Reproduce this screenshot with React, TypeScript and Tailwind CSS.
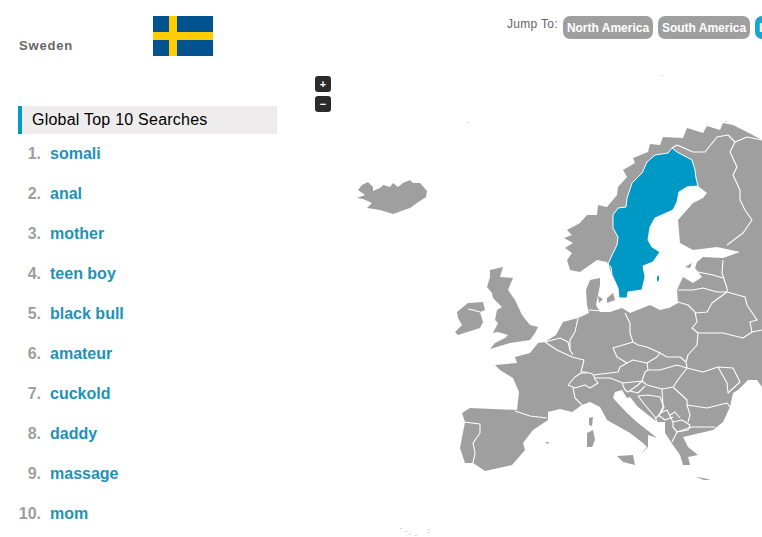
const land = [
  "770,130 762,140 747,132 733,125 723,123 720,130 707,126 703,133 687,128 683,138 663,137 660,145 650,144 648,152 633,158 635,163 623,170 627,177 618,187 617,195 607,207 598,205 597,215 587,215 580,223 567,230 572,235 564,238 573,243 565,248 572,253 567,260 570,270 580,272 597,260 607,262 608,264 612,275 618,288 619,298 627,298 628,292 642,290 645,277 643,266 653,262 660,252 652,247 648,240 650,227 655,218 673,210 677,202 679,192 687,186 698,186 707,193 703,198 693,203 678,220 680,243 693,250 717,247 740,252 723,258 703,257 697,262 695,268 702,277 693,283 683,277 677,290 678,303 668,308 660,310 650,305 630,313 622,308 610,312 600,312 596,305 598,295 600,285 600,278 590,280 586,290 587,305 589,313 578,318 563,322 556,335 545,342 538,343 530,353 515,357 517,363 495,365 500,370 513,378 519,392 517,410 470,408 462,413 465,422 460,448 465,463 473,463 485,471 512,465 525,450 523,443 533,430 548,420 548,412 560,409 572,412 582,405 590,402 600,407 607,420 630,433 643,443 647,447 640,455 648,447 648,435 657,438 647,430 638,423 627,413 613,398 615,392 622,390 627,398 630,397 638,407 657,422 665,422 665,433 673,445 680,455 683,465 690,465 688,457 698,455 688,447 683,437 713,430 723,422 730,407 733,393 738,390 748,380 757,380 762,387 770,390",
  "490,270 503,267 500,277 513,278 508,290 515,300 522,315 530,325 538,327 535,333 530,340 510,343 490,349 495,343 505,338 508,335 498,332 493,333 498,323 495,320 497,310 502,307 493,298 492,293 487,287 490,277",
  "457,312 468,303 483,302 485,310 480,312 483,322 480,328 458,335 455,332 462,325 458,318",
  "357,198 365,195 358,190 362,185 368,182 373,187 373,191 380,188 383,185 390,187 393,183 398,187 403,183 410,180 413,183 420,183 427,191 426,197 417,203 410,208 393,214 380,210 367,208 372,203 363,199",
  "617,456 633,455 635,465 623,462",
  "587,433 593,430 595,440 592,447 587,447",
  "589,418 593,417 592,426 589,425",
  "545,442 549,442 548,444",
  "695,477 703,478 711,480 704,480",
  "607,298 613,293 615,300 607,303",
  "598,296 603,299 599,303",
  "685,267 692,263 690,268",
];

const borders = [
  "672,148 677,145 693,152 705,152 717,137 728,135 735,142 747,137 762,140",
  "735,142 730,152 737,167 733,175 740,190 740,200 745,210 752,220 743,233 727,245",
  "723,260 722,273 727,288 727,292 745,297 747,305 757,320 750,322 752,332",
  "698,272 703,273 713,275 723,278",
  "678,290 693,290 703,288 717,292 727,292",
  "727,292 712,303 707,312 695,313",
  "668,308 678,302 688,305 695,312",
  "695,312 697,322 692,328 698,333 697,345 688,355 686,362 687,368",
  "698,333 723,333 743,338 752,332 762,330",
  "625,313 630,323 630,333 633,342",
  "633,342 613,348 617,357 627,363 633,360 647,363 657,357 660,353 647,347 638,345 633,342",
  "660,353 667,357 680,357 686,362",
  "647,363 648,370 660,370 677,365 687,368",
  "627,363 620,367 618,372 593,375 595,378 610,378 623,383 642,381 645,372 648,370",
  "584,360 581,372 585,372 593,374",
  "545,342 557,350 572,357 584,360",
  "545,342 560,338 568,342 570,350 573,355",
  "578,318 575,332 570,340 570,350",
  "589,310 603,311",
  "568,385 575,377 581,373 587,373",
  "568,385 575,388 585,385 590,388 598,383 594,378",
  "573,388 575,398 582,405",
  "515,411 530,416 547,418",
  "464,422 480,424 480,433 473,443 475,453 473,463",
  "622,383 625,390 628,392 638,385 642,381",
  "642,381 647,385 662,389 673,387 680,377 687,368",
  "638,396 648,395 660,397 664,407 661,413 656,418",
  "638,396 645,405 655,417 657,422",
  "630,391 638,393 645,386",
  "687,368 703,372 718,367 733,368 740,382 728,393 727,383 718,367",
  "687,405 707,408 727,403 730,407",
  "673,387 687,400 687,405 690,415 688,422",
  "673,422 682,420 690,425 688,430 677,432 673,427 673,422",
  "662,389 663,407 660,413 667,410 673,422",
  "658,415 665,420 673,417",
  "673,427 677,432 672,442",
  "677,432 692,427 715,427",
  "670,415 675,412 680,418",
  "468,309 473,310 480,312",
];

const sweden =
  "672,148 677,152 692,160 695,170 696,178 698,186 687,187 679,192 677,202 673,210 655,218 650,227 648,240 652,247 660,252 653,262 643,266 645,277 642,290 628,292 627,298 619,298 618,288 612,275 611,267 608,264 613,253 617,245 618,237 613,228 613,215 618,208 626,207 627,198 632,183 642,173 647,162 655,155 668,153";

const specks = [
  [467, 122], [661, 75], [405, 531], [409, 534], [415, 535], [427, 532], [428, 529], [400, 528], [725, 121],
];

const searches = ["somali", "anal", "mother", "teen boy", "black bull", "amateur", "cuckold", "daddy", "massage", "mom"];

export default function App() {
  return (
    <div className="relative flex h-[537px] w-[762px] overflow-hidden bg-white font-['Liberation_Sans',Arial,sans-serif]">
      <svg className="absolute inset-0" width="762" height="537" viewBox="0 0 762 537">
        {land.map((p) => (
          <polygon key={p} points={p} fill="#9f9f9f" />
        ))}
        {borders.map((p) => (
          <polyline key={p} points={p} fill="none" stroke="#ffffff" strokeWidth="1.1" strokeLinejoin="round" />
        ))}
        <polygon points={sweden} fill="#0099c6" stroke="#ffffff" strokeWidth="1" />
        <polygon points="657,277 659,275 659,280 657,282" fill="#0099c6" />
        {specks.map(([x, y]) => (
          <rect key={`${x}-${y}`} x={x} y={y} width="2" height="1" fill="#d4d4d4" />
        ))}
      </svg>

      <div className="relative w-[315px] shrink-0 pl-[18px]">
        <div className="flex h-[106px] items-start pt-[16px]">
          <div className="mt-[22px] w-[135px] pl-px text-[13px] leading-4 font-bold tracking-[0.8px] text-[#666666]">
            Sweden
          </div>
          <svg width="60" height="40" viewBox="0 0 60 40" className="shrink-0">
            <rect width="60" height="40" fill="#00538f" />
            <rect x="16" width="8" height="40" fill="#ffcd00" />
            <rect y="16" width="60" height="8" fill="#ffcd00" />
          </svg>
        </div>
        <h2 className="flex h-[28px] w-[259px] items-center border-l-4 border-[#009ac8] bg-[#eeecec] pl-[10px] text-[16px] font-normal tracking-[0.23px] text-black">
          Global Top 10 Searches
        </h2>
        <ol>
          {searches.map((s, i) => (
            <li key={s} className="flex h-[40px] items-center text-[16px] font-bold">
              <span className="w-[23px] whitespace-nowrap text-right text-[#9e9e9e]">{i + 1}.</span>
              <span className="ml-[9px] text-[#1e91b8]">{s}</span>
            </li>
          ))}
        </ol>
      </div>

      <div className="absolute top-[76px] left-[315px] flex flex-col gap-1">
        <button className="flex h-4 w-4 items-center justify-center rounded-[3px] bg-[#2b2b2b] text-[11px] leading-none font-bold text-white">+</button>
        <button className="flex h-4 w-4 items-center justify-center rounded-[3px] bg-[#2b2b2b] text-[11px] leading-none font-bold text-white">−</button>
      </div>

      <div className="relative flex min-w-0 flex-1 items-start gap-[5px] overflow-hidden pt-[16px] pl-[192px] whitespace-nowrap">
        <span className="w-[51px] shrink-0 text-[12px] leading-4 tracking-[0.3px] text-[#666666]">Jump To:</span>
        <span className="flex h-[23px] w-[90px] shrink-0 items-center justify-center rounded-[7px] bg-[#9f9f9f] text-[12px] font-bold text-white">North America</span>
        <span className="flex h-[23px] w-[92px] shrink-0 items-center justify-center rounded-[7px] bg-[#9f9f9f] text-[12px] font-bold text-white">South America</span>
        <span className="flex h-[23px] w-[60px] shrink-0 items-center justify-start rounded-[7px] bg-[#19a5cf] pl-[4px] text-[12px] font-bold text-white">Europe</span>
      </div>
    </div>
  );
}
